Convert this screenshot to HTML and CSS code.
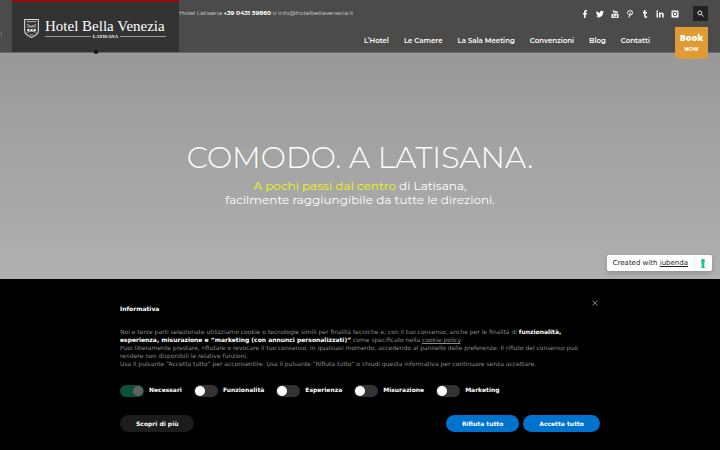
FILE: index.html
```
<!DOCTYPE html>
<html lang="it">
<head>
    <meta charset="UTF-8">
    <meta name="viewport" content="width=device-width, initial-scale=1.0">
    <title>Hotel Bella Venezia</title>
    <link rel="stylesheet" href="styles.css">
</head>
<body>
    <header class="site-header">
        <a href="#" class="logo">
            <svg class="crest" viewBox="0 0 14 18" fill="none" stroke="#ddd" stroke-width="1">
                <path d="M.5.5h13v10.500q0 4-6.500 6.500q-6.500-2.500-6.500-6.500z"/>
                <path d="M2.500 2.500h9M2.500 5l4.500 2 4.500-2M2.500 7.500h9M3 13q4-3 8 0M5 15h4" stroke-width=".7"/>
                <path d="M3 9.500h2v2H3zM6 9.500h2v2H6zM9 9.500h2v2H9z" fill="#fff" stroke="none"/>
            </svg>
            <span class="logo-text">
                <span class="logo-name">Hotel Bella Venezia</span>
                <span class="logo-place">LATISANA</span>
            </span>
        </a>
        <div class="header-main">
            <div class="top-row">
                <p class="contact">Hotel Latisana <strong>+39 0431 59860</strong> o info@hotelbellavenezia.it</p>
                <div class="social">
                    <a href="#" aria-label="Facebook"><svg viewBox="0 0 16 16"><path d="M6 16V9H4V6h2V4q0-4 4-4h2v3h-1.500Q9 3 9 4.500V6h3l-.5 3H9v7z"/></svg></a>
                    <a href="#" aria-label="Twitter"><svg viewBox="0 0 16 16"><path d="M16 3l-1.700 1.700C14.300 10.500 10.500 15 5 15c-2 0-3.700-.5-5-1.500 2 0 3.500-.5 4.700-1.400C3.200 12 2.200 11 1.700 9.800h1.500C1.500 9.300.600 8 .600 6.400l1.500.4C.700 5.500.300 4 1.200 2.200 3 4.300 5 5.600 7.900 5.800 7.500 3.500 9 1.700 11.100 1.700c1 0 1.800.4 2.400 1l2-.8-1.300 1.800z"/></svg></a>
                    <a href="#" aria-label="YouTube"><svg viewBox="0 0 16 16"><path d="M3 0h1.300l.7 2.500L5.700 0H7L5.600 4v2.500H4.400V4zM8 2h2.500v4.500H7V2zm1 1-.5 2.500h.8V3zM11 2h1v3.500h1V2h1v4.500h-3z"/><path fill-rule="evenodd" d="M2 7.500h12l1 1V15l-1 1H2l-1-1V8.500zM3 9v1h1v4.500h1V10h1V9zm3.500 2v3.500H9V11H8v2.500h-.5V11zM10 9v5.500h2V11h-1V9z"/></svg></a>
                    <a href="#" aria-label="Pinterest"><svg viewBox="0 0 16 16"><path class="line" d="M4.500 9Q2 7 3 4.500 4.500 1 8.500 1 13 1 13 5q0 5-4 5Q7.500 10 7.200 9M8.500 4.500L6 15"/></svg></a>
                    <a href="#" aria-label="Tumblr"><svg viewBox="0 0 16 16"><path d="M6 0h3v4h3v3H9v4q0 2 1.500 2l1.800-.5V15.500Q6 17 6 11.500V7H4V4.500Q6 3.500 6 0z"/></svg></a>
                    <a href="#" aria-label="LinkedIn"><svg viewBox="0 0 16 16"><path d="M1 5h3v10H1zM1 1h3v3H1zM6 5h3v1.500Q10 4.800 12 4.800q3.500 0 3.500 4V15h-3V9.500q0-2-1.600-2Q9 7.500 9 9.500V15H6z"/></svg></a>
                    <a href="#" aria-label="Instagram"><svg viewBox="0 0 16 16"><rect x="1" y="1" width="14" height="14" rx="1"/><circle cx="8" cy="8" r="3.500" fill="none" stroke="#4b4b4b" stroke-width="2"/><path d="M11 3h2v2h-2zM3 3h2v2H3z" fill="#4b4b4b"/></svg></a>
                </div>
                <button class="search" aria-label="Cerca">
                    <svg viewBox="0 0 16 16"><circle class="line" cx="6.500" cy="6.500" r="4.500"/><path class="line" d="M10 10l5 5"/></svg>
                </button>
            </div>
            <div class="nav-row">
                <nav class="menu">
                    <a href="#">L’Hotel</a>
                    <a href="#">Le Camere</a>
                    <a href="#">La Sala Meeting</a>
                    <a href="#">Convenzioni</a>
                    <a href="#">Blog</a>
                    <a href="#">Contatti</a>
                </nav>
                <a href="#" class="book"><strong>Book</strong><span>NOW</span></a>
            </div>
        </div>
        <span class="slide-mark">!</span>
    </header>

    <main class="hero">
        <h1>COMODO. A LATISANA.</h1>
        <p><em>A pochi passi dal centro</em> di Latisana,<br>facilmente raggiungibile da tutte le direzioni.</p>
        <div class="badge">
            <span>Created with <a href="#">iubenda</a></span>
            <svg viewBox="0 0 6 10"><path d="M3 0a2 2 0 0 1 1.500 3.500V8.500H5V10H1V8.500h.5V5H1V3.500h.5A2 2 0 0 1 3 0z" fill="#1cc691"/></svg>
        </div>
    </main>

    <!-- Informativa cookie -->
    <section class="cookie" aria-labelledby="cookie-title">
        <div class="cookie-inner">
            <div class="cookie-head">
                <h2 id="cookie-title">Informativa</h2>
                <button class="close" aria-label="Chiudi">
                    <svg viewBox="0 0 6 6"><path d="M.5.5l5 5M5.500.5l-5 5" stroke="#aaa" stroke-width=".7"/></svg>
                </button>
            </div>
            <p class="cookie-text">
                Noi e terze parti selezionate utilizziamo cookie o tecnologie simili per finalità tecniche e, con il tuo consenso, anche per le finalità di <strong>funzionalità,<br>esperienza, misurazione e “marketing (con annunci personalizzati)”</strong> come specificato nella <a href="#">cookie policy</a>.<br>
                Puoi liberamente prestare, rifiutare o revocare il tuo consenso, in qualsiasi momento, accedendo al pannello delle preferenze. Il rifiuto del consenso può<br>rendere non disponibili le relative funzioni.<br>
                Usa il pulsante “Accetta tutto” per acconsentire. Usa il pulsante “Rifiuta tutto” o chiudi questa informativa per continuare senza accettare.
            </p>
            <div class="toggles">
                <label><input type="checkbox" checked disabled>Necessari</label>
                <label><input type="checkbox">Funzionalità</label>
                <label><input type="checkbox">Esperienza</label>
                <label><input type="checkbox">Misurazione</label>
                <label><input type="checkbox">Marketing</label>
            </div>
            <div class="actions">
                <button class="btn more">Scopri di più</button>
                <button class="btn">Rifiuta tutto</button>
                <button class="btn">Accetta tutto</button>
            </div>
        </div>
    </section>
</body>
</html>
```
FILE: styles.css
```
* {
    box-sizing: border-box;
}

body {
    margin: 0;
    min-height: 100vh;
    display: flex;
    flex-direction: column;
    font-family: Montserrat, Inter, sans-serif;
    color: #fff;
    background-color: #000;
}

a {
    color: inherit;
    text-decoration: none;
}

button {
    border: none;
    padding: 0;
    color: inherit;
    font-family: inherit;
    cursor: pointer;
}

h1, h2, p {
    margin: 0;
}

svg {
    display: block;
}

/* Testata */
.site-header {
    position: relative;
    z-index: 1;
    display: flex;
    padding: 0 12px;
    background-color: #4b4b4b;
    border-bottom: 1px solid #6c6c6c;
}

.logo {
    position: relative;
    display: flex;
    align-items: center;
    gap: 6px;
    width: 167px;
    height: 52px;
    padding: 2px 13px 0 12px;
    background-color: #333;
    border-top: 2px solid #980c10;
}

.logo::after {
    content: "";
    position: absolute;
    left: 50%;
    bottom: -2px;
    width: 4px;
    height: 4px;
    border-radius: 50%;
    background-color: #111;
    transform: translateX(-50%);
}

.crest {
    width: 15px;
    height: 19px;
}

.logo-text {
    flex: 1;
    font-family: "Liberation Serif", serif;
    white-space: nowrap;
}

.logo-name {
    display: block;
    font-size: 15px;
    line-height: 16px;
}

.logo-place {
    display: flex;
    align-items: center;
    gap: 2px;
    font-size: 5px;
    line-height: 5px;
    font-weight: bold;
}

.logo-place::before,
.logo-place::after {
    content: "";
    flex: 1;
    height: 1px;
    background-color: #999;
}

.slide-mark {
    position: absolute;
    left: 0;
    top: 30px;
    font-size: 8px;
    line-height: 8px;
    color: #888;
}

.header-main {
    flex: 1;
}

.top-row,
.nav-row {
    display: flex;
    align-items: center;
}

.top-row {
    padding-top: 6px;
}

.contact {
    flex: 1;
    font-size: 6px;
    line-height: 15px;
    color: #ddd;
}

.contact strong {
    color: #fff;
}

.social {
    display: flex;
    gap: 7px;
    margin-right: 14px;
}

.social svg {
    width: 8px;
    height: 8px;
    fill: #fff;
}

.social .line,
.search .line {
    fill: none;
    stroke: #fff;
    stroke-width: 2;
}

.search {
    display: grid;
    place-items: center;
    width: 15px;
    height: 15px;
    background-color: #222;
}

.search svg {
    width: 7px;
    height: 7px;
}

.nav-row {
    justify-content: flex-end;
    align-items: flex-start;
    gap: 25px;
    height: 31px;
    padding-top: 6px;
}

.menu {
    display: flex;
    gap: 15px;
    padding-top: 8px;
    font-size: 7px;
    line-height: 12px;
    font-weight: 600;
}

.book {
    position: relative;
    width: 33px;
    height: 29px;
    padding-top: 4px;
    background-color: #e09b35;
    text-align: center;
}

.book::after {
    content: "";
    position: absolute;
    left: 0;
    right: 0;
    top: 29px;
    height: 3px;
    background-color: #e09b35;
    border-radius: 0 0 50% 50%;
}

.book strong,
.book span {
    display: block;
}

.book strong {
    font-family: "Open Sans", sans-serif;
    font-size: 9px;
    line-height: 13px;
    font-weight: 800;
}

.book span {
    font-size: 5px;
    line-height: 10px;
    font-weight: bold;
}

/* Slide principale */
.hero {
    position: relative;
    flex: 1;
    display: flex;
    flex-direction: column;
    align-items: center;
    justify-content: center;
    padding-top: 15px;
    text-align: center;
    background: linear-gradient(#999, #b0b0b0);
}

.hero h1 {
    margin-bottom: 3px;
    font-size: 30px;
    line-height: 36px;
    font-weight: 300;
}

.hero p {
    font-size: 12px;
    line-height: 14px;
}

.hero em {
    font-style: normal;
    color: #f4f40c;
}

.badge {
    position: absolute;
    right: 8px;
    bottom: 8px;
    display: flex;
    align-items: center;
    gap: 6px;
    height: 16px;
    padding: 0 6px;
    border-radius: 2px;
    background-color: #fff;
    box-shadow: 0 2px 5px rgba(0, 0, 0, 0.2);
    font-family: "DejaVu Sans", sans-serif;
    font-size: 7px;
    color: #222;
}

.badge a {
    text-decoration: underline;
}

.badge svg {
    box-sizing: content-box;
    width: 6px;
    height: 9px;
    padding: 3px 0 3px 5px;
    border-left: 1px solid #eee;
}

/* Banner cookie */
.cookie {
    padding: 20px 24px 18px;
    font-family: "DejaVu Sans", sans-serif;
}

.cookie-inner {
    max-width: 480px;
    margin: 0 auto;
}

.cookie-head {
    display: flex;
    justify-content: space-between;
    padding-right: 2px;
}

.cookie h2 {
    padding-top: 4px;
    font-size: 6px;
    line-height: 12px;
}

.close {
    width: 6px;
    height: 8px;
    background: none;
}

.close svg {
    width: 6px;
    height: 6px;
}

.cookie-text {
    margin-top: 13px;
    font-size: 6px;
    line-height: 8px;
    color: #8c8c8c;
}

.cookie-text strong {
    color: #fff;
}

.cookie-text a {
    text-decoration: underline;
}

.toggles {
    display: flex;
    gap: 12px;
    margin-top: 17px;
}

.toggles label {
    display: flex;
    gap: 5px;
    font-size: 6px;
    line-height: 10px;
    font-weight: bold;
}

.toggles input {
    appearance: none;
    display: flex;
    width: 24px;
    height: 12px;
    margin: 0;
    padding: 1px;
    border-radius: 6px;
    background-color: #333;
}

.toggles input::before {
    content: "";
    width: 10px;
    height: 10px;
    border-radius: 50%;
    background-color: #fff;
}

.toggles input:checked {
    justify-content: flex-end;
    background-color: #0b5039;
}

.toggles input:checked::before {
    background-color: #606060;
}

.actions {
    display: flex;
    gap: 4px;
    margin-top: 18px;
}

.btn {
    height: 17px;
    padding: 0 16px;
    border-radius: 9px;
    background-color: #0073ce;
    font-size: 6px;
    font-weight: bold;
}

.btn.more {
    margin-right: auto;
    background-color: #1c1c1c;
}
```
